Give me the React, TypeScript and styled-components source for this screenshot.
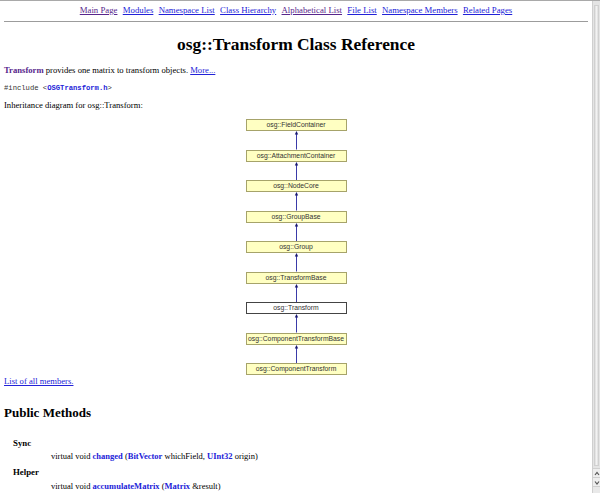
import React from "react";
import styled, { createGlobalStyle } from "styled-components";

const Global = createGlobalStyle`
  html, body { margin: 0; padding: 0; background: #fff; overflow: hidden; }
  body { font-family: "Liberation Serif", "Times New Roman", serif; color: #000; }
`;

const BLUE = "#2222d8";
const PURPLE = "#58268c";
const TEXT = "8.65px";

const Page = styled.div`
  display: flex;
  height: 493px;
  border-top: 1px solid #a9a9a9;
  box-sizing: border-box;
`;

const Content = styled.div`
  flex: 1;
  padding: 0 4px;
  min-width: 0;
`;

const Nav = styled.div`
  margin-top: 3px;
  display: flex;
  justify-content: center;
  gap: 5.3px;
  font-size: 8.75px;
  line-height: 12px;
`;

const Link = styled.a<{ $visited?: boolean; $bold?: boolean; $plain?: boolean }>`
  color: ${(p) => (p.$visited ? PURPLE : BLUE)};
  font-weight: ${(p) => (p.$bold ? "bold" : "normal")};
  text-decoration: ${(p) => (p.$plain ? "none" : "underline")};
  cursor: pointer;
`;

const Rule = styled.div`
  margin-top: 5px;
  height: 1px;
  background: #9c9c9c;
`;

const Title = styled.h1`
  margin: 11px 0 0;
  font-size: 17.4px;
  line-height: 22px;
  font-weight: bold;
  text-align: center;
`;

const Para = styled.p<{ $mt: number }>`
  margin: ${(p) => p.$mt}px 0 0;
  font-size: ${TEXT};
  line-height: 12px;
`;

const Include = styled.div`
  margin-top: 7px;
  font-family: "Liberation Mono", "Courier New", monospace;
  font-size: 7.2px;
  line-height: 11px;
  color: #333;
`;

const Diagram = styled.div`
  margin-top: 8px;
  display: flex;
  flex-direction: column;
  align-items: center;
`;

const Box = styled.div<{ $current?: boolean }>`
  width: 101px;
  height: 12px;
  box-sizing: border-box;
  border: 1px solid ${(p) => (p.$current ? "#444" : "#a6a36a")};
  background: ${(p) => (p.$current ? "#fff" : "#ffffc2")};
  font-family: "Liberation Sans", Arial, sans-serif;
  font-size: 6.8px;
  line-height: 10px;
  color: #333;
  text-align: center;
  white-space: nowrap;
`;

const Connector = styled.svg`
  display: block;
  width: 9px;
  height: 18.5px;
`;

const Arrow = () => (
  <Connector viewBox="0 0 9 18.5">
    <line x1="4.5" y1="2" x2="4.5" y2="18.5" stroke="#3a3aa8" strokeWidth="1" />
    <polygon points="4.5,0 2.8,3.5 6.2,3.5" fill="#191970" />
  </Connector>
);

const H2 = styled.h2`
  margin: 18px 0 0;
  font-size: 13px;
  line-height: 16px;
  font-weight: bold;
`;

const Group = styled.div<{ $mt: number }>`
  margin-top: ${(p) => p.$mt}px;
  padding-left: 9px;
  font-size: 8.8px;
  line-height: 12px;
  font-weight: bold;
`;

const Member = styled.div<{ $mt: number }>`
  margin-top: ${(p) => p.$mt}px;
  padding-left: 47px;
  font-size: 8.5px;
  line-height: 11px;
  white-space: nowrap;
`;

const Scrollbar = styled.div`
  width: 8px;
  display: flex;
  flex-direction: column;
  background: #e4e4e4;
  border-left: 1px solid #cfcfcf;
  box-sizing: border-box;
`;

const Track = styled.div`
  flex: 1;
  margin: 4px 1px 2px;
  background: linear-gradient(to right, #dcdcdc, #f2f2f2 50%, #dcdcdc);
  border: 1px solid #d0d0d0;
`;

const ScrollBtn = styled.div`
  height: 8px;
  display: flex;
  align-items: center;
  justify-content: center;
  border-top: 1px solid #cfcfcf;
  background: #eeeeee;
`;

const Corner = styled.div`
  height: 6px;
  background: #e9e9e9;
  border-top: 1px solid #cfcfcf;
`;

const Chevron = ({ up }: { up?: boolean }) => (
  <svg width="6" height="5" viewBox="0 0 6 5">
    <polyline
      points={up ? "1,4 3,1.5 5,4" : "1,1.5 3,4 5,1.5"}
      fill="none"
      stroke="#555"
      strokeWidth="1.2"
    />
  </svg>
);

const classes = [
  "osg::FieldContainer",
  "osg::AttachmentContainer",
  "osg::NodeCore",
  "osg::GroupBase",
  "osg::Group",
  "osg::TransformBase",
  "osg::Transform",
  "osg::ComponentTransformBase",
  "osg::ComponentTransform",
];

const navItems: { label: string; visited?: boolean }[] = [
  { label: "Main Page", visited: true },
  { label: "Modules" },
  { label: "Namespace List" },
  { label: "Class Hierarchy" },
  { label: "Alphabetical List", visited: true },
  { label: "File List" },
  { label: "Namespace Members" },
  { label: "Related Pages" },
];

export default function App() {
  return (
    <>
      <Global />
      <Page>
        <Content>
          <Nav>
            {navItems.map((n) => (
              <Link key={n.label} $visited={n.visited}>
                {n.label}
              </Link>
            ))}
          </Nav>
          <Rule />
          <Title>osg::Transform Class Reference</Title>
          <Para $mt={9}>
            <Link $visited $bold $plain>
              Transform
            </Link>{" "}
            provides one matrix to transform objects. <Link>More...</Link>
          </Para>
          <Include>
            #include &lt;
            <Link $bold $plain>
              OSGTransform.h
            </Link>
            &gt;
          </Include>
          <Para $mt={5}>Inheritance diagram for osg::Transform:</Para>
          <Diagram>
            {classes.map((c, i) => (
              <React.Fragment key={c}>
                {i > 0 && <Arrow />}
                <Box $current={c === "osg::Transform"}>{c}</Box>
              </React.Fragment>
            ))}
          </Diagram>
          <Para $mt={0}>
            <Link>List of all members.</Link>
          </Para>
          <H2>Public Methods</H2>
          <Group $mt={16}>Sync</Group>
          <Member $mt={2}>
            virtual void{" "}
            <Link $bold $plain>
              changed
            </Link>{" "}
            (
            <Link $bold $plain>
              BitVector
            </Link>{" "}
            whichField,{" "}
            <Link $bold $plain>
              UInt32
            </Link>{" "}
            origin)
          </Member>
          <Group $mt={4}>Helper</Group>
          <Member $mt={3}>
            virtual void{" "}
            <Link $bold $plain>
              accumulateMatrix
            </Link>{" "}
            (
            <Link $bold $plain>
              Matrix
            </Link>{" "}
            &amp;result)
          </Member>
          <Member $mt={0}>
            virtual void{" "}
            <Link $bold $plain>
              adjustVolume
            </Link>{" "}
            (
            <Link $bold $plain>
              Volume
            </Link>{" "}
            &amp;volume)
          </Member>
        </Content>
        <Scrollbar>
          <Track />
          <ScrollBtn>
            <Chevron up />
          </ScrollBtn>
          <ScrollBtn>
            <Chevron />
          </ScrollBtn>
          <Corner />
        </Scrollbar>
      </Page>
    </>
  );
}
